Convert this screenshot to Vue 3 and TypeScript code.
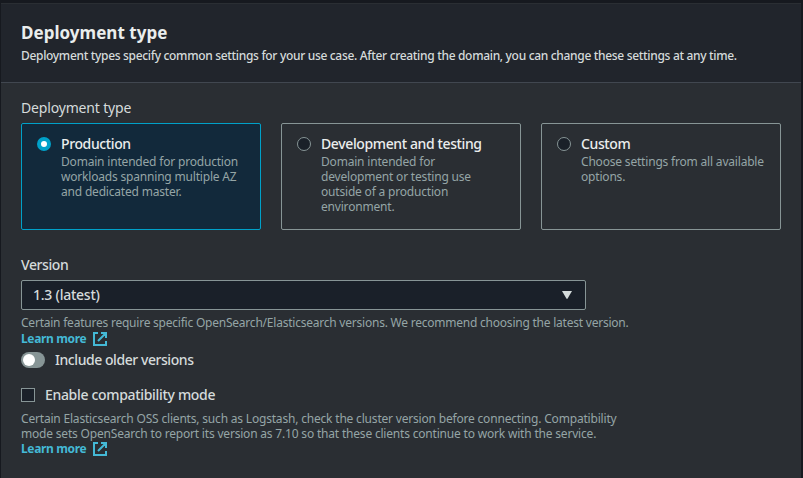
<script setup lang="ts">
import { ref } from 'vue'

interface DeploymentOption {
  id: string
  label: string
  lines: string[]
}

const options: DeploymentOption[] = [
  {
    id: 'production',
    label: 'Production',
    lines: ['Domain intended for production', 'workloads spanning multiple AZ', 'and dedicated master.'],
  },
  {
    id: 'development',
    label: 'Development and testing',
    lines: ['Domain intended for', 'development or testing use', 'outside of a production', 'environment.'],
  },
  {
    id: 'custom',
    label: 'Custom',
    lines: ['Choose settings from all available', 'options.'],
  },
]

const selected = ref('production')
const includeOlder = ref(false)
const compatibility = ref(false)
</script>

<template>
  <main class="page">
    <section class="panel">
      <header class="panel-header">
        <h2 class="title"><span>Deployment type</span></h2>
        <p class="subtitle"><span>Deployment types specify common settings for your use case. After creating the domain, you can change these settings at any time.</span></p>
      </header>

      <div class="panel-body">
        <div class="label"><span>Deployment type</span></div>
        <div class="tiles" role="radiogroup">
          <div
            v-for="option in options"
            :key="option.id"
            class="tile"
            :class="{ selected: selected === option.id }"
            role="radio"
            :aria-checked="selected === option.id"
            @click="selected = option.id"
          >
            <svg class="radio" viewBox="0 0 14 14">
              <circle v-if="selected === option.id" cx="7" cy="7" r="5" class="radio-on" />
              <circle v-else cx="7" cy="7" r="6.5" class="radio-off" />
            </svg>
            <div class="tile-text">
              <div class="tile-label">{{ option.label }}</div>
              <div v-for="line in option.lines" :key="line" class="hint">{{ line }}</div>
            </div>
          </div>
        </div>

        <div class="label version-label"><span>Version</span></div>
        <div class="select" role="combobox">
          <span class="select-value">1.3 (latest)</span>
          <svg class="caret" viewBox="0 0 10 8"><path d="M0 0H10L5.6 7.6Q5 8.4 4.4 7.6Z" /></svg>
        </div>
        <div class="hint version-hint"><span>Certain features require specific OpenSearch/Elasticsearch versions. We recommend choosing the latest version.</span></div>
        <a class="link version-link">
          <span>Learn more</span>
          <svg class="external" viewBox="0 0 14 14">
            <path d="M5 1H1V13H13V9M8 1H13V6M13 1L5 9" />
          </svg>
        </a>

        <div class="toggle-row" @click="includeOlder = !includeOlder">
          <span class="toggle" :class="{ on: includeOlder }"><i class="knob"></i></span>
          <span class="control-label older">Include older versions</span>
        </div>

        <div class="check-row" @click="compatibility = !compatibility">
          <span class="checkbox" :class="{ on: compatibility }"></span>
          <span class="control-label">Enable compatibility mode</span>
        </div>
        <div class="hint compat-first"><span>Certain Elasticsearch OSS clients, such as Logstash, check the cluster version before connecting. Compatibility</span></div>
        <div class="hint"><span>mode sets OpenSearch to report its version as 7.10 so that these clients continue to work with the service.</span></div>
        <a class="link">
          <span>Learn more</span>
          <svg class="external" viewBox="0 0 14 14">
            <path d="M5 1H1V13H13V9M8 1H13V6M13 1L5 9" />
          </svg>
        </a>
      </div>
    </section>
  </main>
</template>

<style>
body {
  background: #16191f;
}
</style>

<style scoped>
.page {
  box-sizing: border-box;
  width: 803px;
  height: 478px;
  padding: 3px 2px 0 1px;
  overflow: hidden;
  background: #16191f;
  color: #d5dbdb;
  font: 14px/22px 'Noto Sans', 'Open Sans', sans-serif;
  letter-spacing: -0.17px;
  white-space: nowrap;
}
.panel {
  box-sizing: border-box;
  height: 475px;
  border-top: 1px solid #2a2e33;
  background: #2a2e33;
}
.panel-header {
  box-sizing: border-box;
  height: 79px;
  padding: 18px 20px 0;
  border-bottom: 1px solid #414750;
  background: #21252c;
}
.title {
  margin: 0;
  color: #eaeded;
  font-size: 17px;
  font-weight: 700;
  line-height: 22px;
  letter-spacing: 0.03px;
}
.subtitle {
  margin: 4px 0 0;
  font-size: 12px;
  font-weight: 500;
  line-height: 16px;
  letter-spacing: -0.32px;
}
.panel-body {
  padding: 14px 20px 0;
}
.label {
  height: 26px;
}
.tiles {
  display: grid;
  grid-template-columns: repeat(3, 240px);
  gap: 20px;
}
.tile {
  display: flex;
  box-sizing: border-box;
  height: 107px;
  padding: 9px 15px;
  border: 1px solid #879596;
  border-radius: 2px;
}
.tile.selected {
  border-color: #00a1c9;
  background: #12293b;
}
.radio {
  flex: none;
  width: 14px;
  height: 14px;
  margin: 4px 10px 0 0;
}
.radio-on {
  fill: #fff;
  stroke: #00a1c9;
  stroke-width: 4;
}
.radio-off {
  fill: #1a2029;
  stroke: #879596;
}
.tile-label {
  height: 21px;
  color: #eaeded;
  font-weight: 500;
  letter-spacing: -0.38px;
}
.hint {
  color: #95a5a6;
  font-size: 12px;
  line-height: 15px;
  letter-spacing: -0.19px;
}
.version-label {
  margin-top: 24px;
  font-weight: 500;
  letter-spacing: -0.4px;
}
.select {
  display: flex;
  align-items: center;
  justify-content: space-between;
  box-sizing: border-box;
  width: 565px;
  height: 30px;
  padding: 0 13px 0 11px;
  border: 1px solid #879596;
  border-radius: 2px;
  background: #1a2029;
}
.select-value {
  font-weight: 500;
  letter-spacing: -0.24px;
}
.caret {
  width: 10px;
  height: 8px;
  fill: #d5dbdb;
}
.version-hint {
  margin-top: 5px;
  letter-spacing: -0.225px;
}
.link {
  display: flex;
  align-items: center;
  gap: 7px;
  height: 16px;
  color: #44b9d6;
  font-size: 12px;
  font-weight: 700;
  line-height: 16px;
  letter-spacing: -0.36px;
}
.version-link {
  margin-top: 1px;
}
.external {
  width: 14px;
  height: 14px;
  fill: none;
  stroke: #44b9d6;
  stroke-width: 2;
}
.toggle-row,
.check-row {
  display: flex;
  align-items: center;
  gap: 10px;
  height: 22px;
}
.toggle-row {
  margin-top: 2px;
}
.toggle {
  box-sizing: border-box;
  width: 24px;
  height: 16px;
  padding: 2px;
  border-radius: 8px;
  background: #879596;
}
.toggle.on {
  padding-left: 10px;
  background: #00a1c9;
}
.knob {
  display: block;
  width: 12px;
  height: 12px;
  border-radius: 50%;
  background: #fff;
}
.control-label {
  font-weight: 500;
  letter-spacing: -0.32px;
}
.older {
  letter-spacing: -0.44px;
}
.check-row {
  margin-top: 13px;
}
.checkbox {
  box-sizing: border-box;
  width: 14px;
  height: 14px;
  border: 1px solid #879596;
  background: #1a2029;
}
.checkbox.on {
  background: #00a1c9;
}
.compat-first {
  margin-top: 5px;
}
</style>
